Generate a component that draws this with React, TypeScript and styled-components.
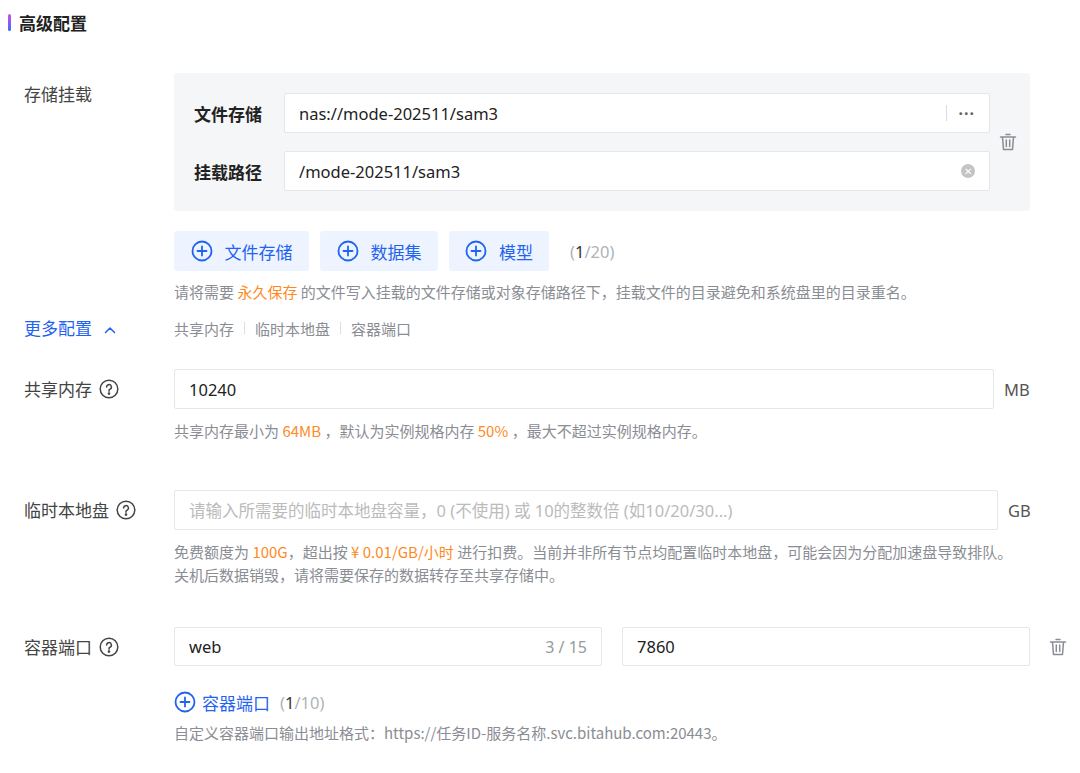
import React from "react";
import styled, { createGlobalStyle } from "styled-components";

const Global = createGlobalStyle`
  body { margin: 0; background: #fff; font-family: "Noto Sans CJK SC", "Noto Sans", sans-serif; color: #333; }
`;

const Page = styled.div`
  width: 1080px; height: 773px; overflow: hidden; box-sizing: border-box;
  padding: 10px 0 0 0;
`;
const Title = styled.div`
  display: flex; align-items: center; gap: 8px; padding-left: 8px;
  font-size: 17px; font-weight: 700; color: #222; height: 24px;
  &::before { content: ""; width: 3px; height: 17px; border-radius: 2px; background: linear-gradient(#d94cf0, #3b6cff); }
`;
const Row = styled.div<{ $mt: number }>`
  display: grid; grid-template-columns: 150px 1fr; margin-top: ${p => p.$mt}px; padding-left: 24px;
`;
const Label = styled.div<{ $pt?: number; $blue?: boolean }>`
  font-size: 17px; color: ${p => (p.$blue ? "#1f63f0" : "#444")}; padding-top: ${p => p.$pt ?? 0}px;
  display: flex; align-items: flex-start; gap: 7px; line-height: 22px;
`;
const Content = styled.div` display: flex; flex-direction: column; `;
const Panel = styled.div`
  width: 856px; box-sizing: border-box; background: #f5f6f8; border-radius: 3px;
  padding: 20px 0 20px 20px; display: flex; align-items: center;
`;
const PanelFields = styled.div` display: flex; flex-direction: column; gap: 18px; `;
const PanelRow = styled.div` display: flex; align-items: center; `;
const PanelLabel = styled.div` width: 90px; font-size: 17px; font-weight: 700; color: #222; `;
const Input = styled.div<{ $w: number; $h?: number; $ph?: boolean }>`
  width: ${p => p.$w}px; height: ${p => p.$h ?? 40}px; box-sizing: border-box; background: #fff;
  border: 1px solid #e4e6eb; border-radius: 2px; display: flex; align-items: center;
  padding: 0 14px; font-size: 16.5px; color: ${p => (p.$ph ? "#bbb" : "#222")}; font-family: "Noto Sans", "Noto Sans CJK SC", sans-serif;
`;
const Grow = styled.span` flex: 1; white-space: nowrap; overflow: hidden; `;
const Sep = styled.span` width: 1px; height: 16px; background: #ddd; margin-right: 12px; `;
const Dots = styled.span` color: #666; font-size: 16px; letter-spacing: 1px; font-weight: 700; `;
const ClearDot = styled.span`
  width: 14px; height: 14px; border-radius: 50%; background: #c4c4c4; color: #fff; font-size: 10px;
  display: flex; align-items: center; justify-content: center;
`;
const IconBtn = styled.span` display: flex; color: #8a8d93; margin-left: 8px; `;
const Buttons = styled.div` display: flex; align-items: center; gap: 11px; margin-top: 20px; `;
const AddBtn = styled.div<{ $w: number }>`
  width: ${p => p.$w}px; height: 40px; background: #eef4ff; border-radius: 3px; display: flex;
  align-items: center; justify-content: center; gap: 12px; color: #1f63f0; font-size: 17px;
`;
const Count = styled.span`
  font-size: 16.5px; color: #b0b3b8; margin-left: 10px; font-family: "Noto Sans", sans-serif;
  b { color: #333; font-weight: 400; }
`;
const Help = styled.div<{ $mt: number }>`
  font-size: 15px; color: #8a8d93; line-height: 23px; margin-top: ${p => p.$mt}px; white-space: nowrap;
  em { font-style: normal; color: #ff8a1f; }
`;
const Tabs = styled.div` display: flex; align-items: center; font-size: 15px; color: #8a8d93; height: 22px; `;
const TabSep = styled.span` width: 1px; height: 12px; background: #ddd; margin: 0 10px; `;
const InputLine = styled.div` display: flex; align-items: center; `;
const Unit = styled.span` font-size: 16.5px; color: #555; margin-left: 10px; font-family: "Noto Sans", sans-serif; `;
const Suffix = styled.span` color: #999; font-size: 16px; `;
const LinkAdd = styled.div`
  display: flex; align-items: center; gap: 6px; color: #1f63f0; font-size: 17px; margin-top: 24px; height: 24px;
`;

const Plus = ({ s = 22 }: { s?: number }) => (
  <svg width={s} height={s} viewBox="0 0 22 22" fill="none" stroke="#1f63f0" strokeWidth="1.8">
    <circle cx="11" cy="11" r="9.5" />
    <path d="M11 6.5v9M6.5 11h9" strokeLinecap="round" />
  </svg>
);
const Q = () => (
  <svg width="20" height="20" viewBox="0 0 20 20" fill="none" stroke="#444" strokeWidth="1.5">
    <circle cx="10" cy="10" r="8.8" />
    <path d="M7.6 8a2.4 2.4 0 1 1 3.4 2.2c-.7.3-1 .8-1 1.5v.6" strokeLinecap="round" />
    <circle cx="10" cy="14.6" r=".6" fill="#444" />
  </svg>
);
const Trash = () => (
  <svg width="20" height="20" viewBox="0 0 20 20" fill="none" stroke="#8a8d93" strokeWidth="1.5">
    <path d="M2.5 5h15M8 2.5h4M4.5 5l1 12.5h9l1-12.5M8.3 8v6.5M11.7 8v6.5" strokeLinecap="round" strokeLinejoin="round" />
  </svg>
);
const Chevron = () => (
  <svg width="14" height="14" viewBox="0 0 14 14" fill="none" stroke="#1f63f0" strokeWidth="1.5">
    <path d="M2.5 9.5 7 5l4.5 4.5" strokeLinecap="round" strokeLinejoin="round" />
  </svg>
);

export default function App() {
  return (
    <Page>
      <Global />
      <Title>高级配置</Title>
      <Row $mt={39}>
        <Label $pt={10}>存储挂载</Label>
        <Content>
          <Panel>
            <PanelFields>
              <PanelRow>
                <PanelLabel>文件存储</PanelLabel>
                <Input $w={706}><Grow>nas://mode-202511/sam3</Grow><Sep /><Dots>···</Dots></Input>
              </PanelRow>
              <PanelRow>
                <PanelLabel>挂载路径</PanelLabel>
                <Input $w={706}><Grow>/mode-202511/sam3</Grow><ClearDot>✕</ClearDot></Input>
              </PanelRow>
            </PanelFields>
            <IconBtn><Trash /></IconBtn>
          </Panel>
          <Buttons>
            <AddBtn $w={135}><Plus />文件存储</AddBtn>
            <AddBtn $w={118}><Plus />数据集</AddBtn>
            <AddBtn $w={100}><Plus />模型</AddBtn>
            <Count>(<b>1</b>/20)</Count>
          </Buttons>
          <Help $mt={9}>请将需要 <em>永久保存</em> 的文件写入挂载的文件存储或对象存储路径下，挂载文件的目录避免和系统盘里的目录重名。</Help>
        </Content>
      </Row>
      <Row $mt={14}>
        <Label $blue>更多配置 <span style={{ marginLeft: 4, paddingTop: 2 }}><Chevron /></span></Label>
        <Tabs>共享内存<TabSep />临时本地盘<TabSep />容器端口</Tabs>
      </Row>
      <Row $mt={28}>
        <Label $pt={9}>共享内存 <span style={{ paddingTop: 1 }}><Q /></span></Label>
        <Content>
          <InputLine><Input $w={820}>10240</Input><Unit>MB</Unit></InputLine>
          <Help $mt={10}>共享内存最小为 <em>64MB</em> ，默认为实例规格内存 <em>50%</em> ，最大不超过实例规格内存。</Help>
        </Content>
      </Row>
      <Row $mt={48}>
        <Label $pt={9}>临时本地盘 <span style={{ paddingTop: 1 }}><Q /></span></Label>
        <Content>
          <InputLine><Input $w={824} $ph>请输入所需要的临时本地盘容量，0 (不使用) 或 10的整数倍 (如10/20/30...)</Input><Unit>GB</Unit></InputLine>
          <Help $mt={10}>免费额度为 <em>100G</em>，超出按 <em>¥ 0.01/GB/小时</em> 进行扣费。当前并非所有节点均配置临时本地盘，可能会因为分配加速盘导致排队。<br />关机后数据销毁，请将需要保存的数据转存至共享存储中。</Help>
        </Content>
      </Row>
      <Row $mt={41}>
        <Label $pt={9}>容器端口 <span style={{ paddingTop: 1 }}><Q /></span></Label>
        <Content>
          <InputLine>
            <Input $w={428} $h={39}><Grow>web</Grow><Suffix>3 / 15</Suffix></Input>
            <Input $w={408} $h={39} style={{ marginLeft: 20 }}>7860</Input>
            <IconBtn style={{ marginLeft: 18 }}><Trash /></IconBtn>
          </InputLine>
          <LinkAdd><Plus />容器端口<Count style={{ marginLeft: 4 }}>(<b>1</b>/10)</Count></LinkAdd>
          <Help $mt={7}>自定义容器端口输出地址格式：https://任务ID-服务名称.svc.bitahub.com:20443。</Help>
        </Content>
      </Row>
    </Page>
  );
}
